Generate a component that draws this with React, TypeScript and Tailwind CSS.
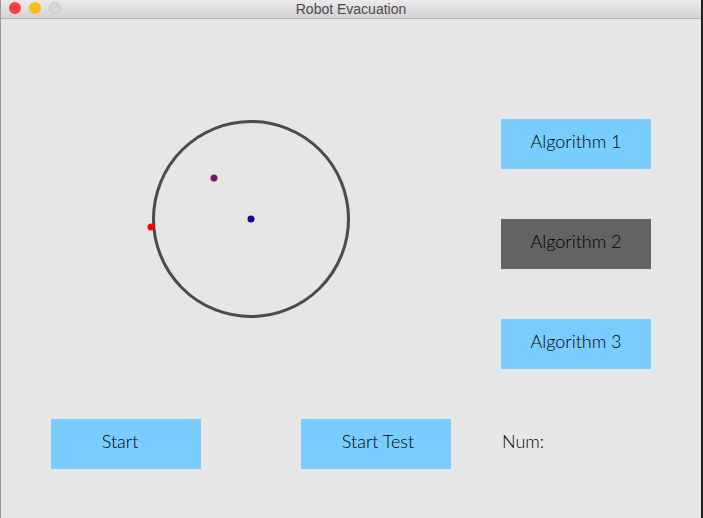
export default function App() {
  const font = { fontFamily: 'Lato, "Noto Sans", sans-serif' }
  const btn = 'h-[50px] w-[150px] pb-[5px] text-[18px] font-light text-black'
  return (
    <div className="flex h-[518px] w-[703px] overflow-hidden bg-[#1f1f1f]" style={font}>
      <div className="flex w-[701px] flex-col border-l border-[#9a9a9a] bg-[#e6e6e6]">
        {/* title bar */}
        <div className="relative flex h-[19px] shrink-0 items-center justify-center border-b border-[#b5b5b5] bg-gradient-to-b from-[#ebe9eb] to-[#d4d2d4]">
          <div className="absolute left-[8px] top-[2px] flex gap-[8px]">
            <span className="h-[12px] w-[12px] rounded-full bg-[#fc3b45]" />
            <span className="h-[12px] w-[12px] rounded-full bg-[#fdbb1c]" />
            <span className="h-[12px] w-[12px] rounded-full border border-[#c8c6c8] bg-[#d9d7d9]" />
          </div>
          <span className="text-[14px] leading-none text-[#4a4a4a]" style={{ fontFamily: '"Liberation Sans", Arial, sans-serif' }}>
            Robot Evacuation
          </span>
        </div>

        {/* content */}
        <div className="flex flex-col pl-[50px] pt-[100px]">
          <div className="flex">
            <div className="w-[450px]">
              <svg width="450" height="250" viewBox="0 0 450 250">
                <circle cx="200" cy="100" r="97.5" fill="none" stroke="#4b4b4b" strokeWidth="3" />
                <circle cx="163" cy="59" r="3.5" fill="#6a1c66" />
                <circle cx="200" cy="100" r="3.5" fill="#1c0090" />
                <circle cx="100" cy="108" r="3.5" fill="#ff0000" />
              </svg>
            </div>
            <div className="flex flex-col gap-[50px]">
              <button className={`${btn} bg-[#79cdfe]`}>Algorithm 1</button>
              <button className={`${btn} bg-[#636363]`}>Algorithm 2</button>
              <button className={`${btn} bg-[#79cdfe]`}>Algorithm 3</button>
            </div>
          </div>
          <div className="mt-[50px] flex items-center">
            <button className={`${btn} pr-[12px] bg-[#79cdfe]`}>Start</button>
            <button className={`${btn} ml-[100px] pl-[4px] bg-[#79cdfe]`}>Start Test</button>
            <span className="ml-[51px] pb-[5px] text-[18px] font-light text-black">Num:</span>
          </div>
        </div>
      </div>
    </div>
  )
}
